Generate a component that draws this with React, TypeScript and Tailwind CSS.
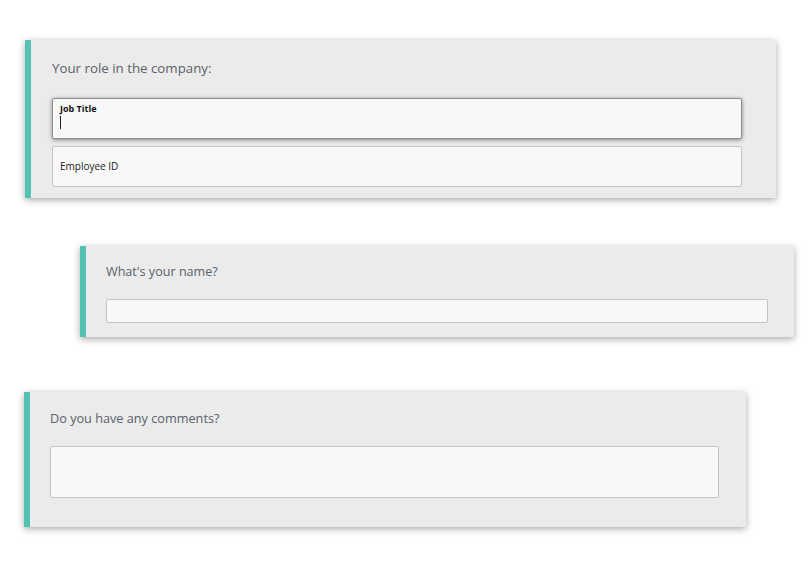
import React from "react";

const font = { fontFamily: '"Open Sans", "Noto Sans", sans-serif' };

export default function App() {
  return (
    <div className="min-h-[582px] w-[810px] bg-white pt-[40px]" style={font}>
      {/* Card 1 */}
      <div className="ml-[25px] flex h-[158px] w-[751px] bg-[#ebebeb] shadow-[0_2px_7px_rgba(0,0,0,0.35)]">
        <div className="w-[6px] shrink-0 bg-[#52c3b1]" />
        <div className="flex flex-1 flex-col pl-[21px] pr-[34px] pt-[18px]">
          <div className="text-[13.3px] leading-[20px] text-[#5a6169]">Your role in the company:</div>
          <div className="mt-[20px] flex h-[41px] flex-col rounded-[2px] border border-[#8f8f8f] bg-[#f8f8f8] px-[7px] pt-[4px] shadow-[0_1px_4px_rgba(0,0,0,0.45)]">
            <div className="text-[9px] font-bold leading-[12px] text-[#111]">Job Title</div>
            <div className="mt-[1px] h-[13px] w-[1px] bg-[#222]" />
          </div>
          <div className="mt-[7px] flex h-[41px] items-center rounded-[2px] border border-[#c4c4c4] bg-[#f8f8f8] px-[7px]">
            <span className="text-[10px] text-[#222]">Employee ID</span>
          </div>
        </div>
      </div>

      {/* Card 2 */}
      <div className="ml-[80px] mt-[48px] flex h-[91px] w-[714px] bg-[#ebebeb] shadow-[0_2px_7px_rgba(0,0,0,0.35)]">
        <div className="w-[6px] shrink-0 bg-[#52c3b1]" />
        <div className="flex flex-1 flex-col pl-[20px] pr-[26px] pt-[16px]">
          <div className="text-[12.6px] leading-[20px] text-[#5a6169]">What's your name?</div>
          <div className="mt-[17px] h-[24px] rounded-[2px] border border-[#c4c4c4] bg-[#f8f8f8]" />
        </div>
      </div>

      {/* Card 3 */}
      <div className="ml-[24px] mt-[55px] flex h-[135px] w-[722px] bg-[#ebebeb] shadow-[0_2px_7px_rgba(0,0,0,0.35)]">
        <div className="w-[6px] shrink-0 bg-[#52c3b1]" />
        <div className="flex flex-1 flex-col pl-[20px] pr-[27px] pt-[16px]">
          <div className="text-[12.7px] leading-[20px] text-[#5a6169]">Do you have any comments?</div>
          <div className="mt-[18px] h-[52px] rounded-[2px] border border-[#c4c4c4] bg-[#f8f8f8]" />
        </div>
      </div>
    </div>
  );
}
